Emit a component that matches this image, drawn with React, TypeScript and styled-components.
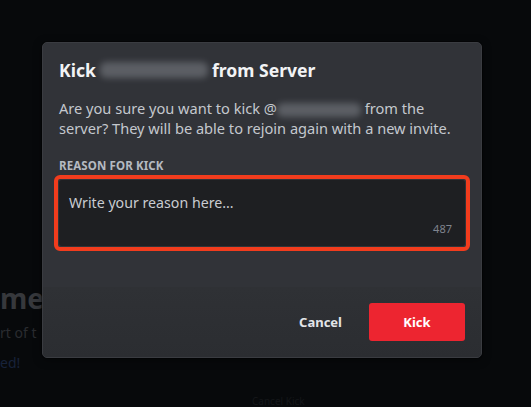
import React from "react";
import styled, { createGlobalStyle } from "styled-components";

const Global = createGlobalStyle`
  html, body { margin: 0; padding: 0; background: #07090b; }
  body { font-family: "Noto Sans", "Open Sans", sans-serif; }
  * { box-sizing: border-box; }
`;

const Page = styled.div`
  position: relative;
  width: 531px;
  height: 407px;
  overflow: hidden;
  background: #07090b;
`;

const Backdrop = styled.div`
  display: flex;
  flex-direction: column;
  padding-top: 281px;
`;

const BgHeading = styled.div`
  font-size: 28px;
  font-weight: 700;
  line-height: 34px;
  color: #36383c;
`;

const BgLine = styled.div`
  font-size: 14px;
  line-height: 20px;
  color: #2a2c30;
  margin-top: 8px;
`;

const BgLink = styled.div`
  font-size: 14px;
  line-height: 20px;
  color: #17223a;
  margin-top: 10px;
`;

const BgFoot = styled.div`
  position: absolute;
  left: 252px;
  bottom: 0;
  font-size: 10px;
  line-height: 12px;
  color: #141619;
`;

const Modal = styled.div`
  position: absolute;
  left: 42px;
  top: 42px;
  width: 440px;
  display: flex;
  flex-direction: column;
  background: #313338;
  border: 1px solid #3a3c41;
  border-radius: 5px;
  overflow: hidden;
  box-shadow: 0 0 0 1px rgba(0, 0, 0, 0.3), 0 2px 10px rgba(0, 0, 0, 0.4);
`;

const Header = styled.div`
  padding: 15px 16px 16px;
`;

const Title = styled.h1`
  margin: 0;
  font-size: 17.6px;
  line-height: 24px;
  font-weight: 700;
  color: #f2f3f5;
  display: flex;
  align-items: center;
  gap: 4px;
`;

const Blur = styled.span<{ $w: number; $h: number }>`
  display: inline-block;
  width: ${(p) => p.$w}px;
  height: ${(p) => p.$h}px;
  border-radius: 6px;
  background: #6a6d73;
  filter: blur(3px);
  vertical-align: middle;
  opacity: 0.75;
`;

const Content = styled.div`
  padding: 0 16px;
  display: flex;
  flex-direction: column;
`;

const Body = styled.p`
  margin: 0 0 20px;
  font-size: 14.6px;
  line-height: 20px;
  color: #c4c8ce;
`;

const Label = styled.div`
  font-size: 11.5px;
  line-height: 16px;
  font-weight: 700;
  letter-spacing: 0.01em;
  text-transform: uppercase;
  color: #b5bac1;
  margin-bottom: 6px;
`;

const Highlight = styled.div`
  outline: 4px solid #f23c1d;
  outline-offset: 1px;
  border-radius: 1px;
`;

const InputBox = styled.div`
  position: relative;
  height: 66px;
  background: #1e1f22;
  border-radius: 3px;
  padding: 13px 10px;
`;

const Placeholder = styled.div`
  font-size: 14.2px;
  line-height: 20px;
  color: #c9ccd1;
`;

const Counter = styled.span`
  position: absolute;
  right: 13px;
  bottom: 10px;
  font-size: 11px;
  line-height: 14px;
  color: #80848e;
`;

const Spacer = styled.div`
  height: 41px;
`;

const Footer = styled.div`
  display: flex;
  justify-content: flex-end;
  align-items: center;
  gap: 11px;
  padding: 16px 16px;
  background: linear-gradient(#2f3135, #2b2d31);
`;

const Button = styled.button<{ $variant: "link" | "danger" }>`
  height: 38px;
  min-width: ${(p) => (p.$variant === "danger" ? "96px" : "0")};
  padding: 2px 16px;
  border: none;
  border-radius: 3px;
  font-family: inherit;
  font-size: 13px;
  font-weight: 700;
  color: ${(p) => (p.$variant === "danger" ? "#ffffff" : "#e3e5e8")};
  background: ${(p) => (p.$variant === "danger" ? "#ed2530" : "transparent")};
  cursor: pointer;
`;

export default function App() {
  return (
    <Page>
      <Global />
      <Backdrop>
        <BgHeading>me</BgHeading>
        <BgLine>rt of t</BgLine>
        <BgLink>ed!</BgLink>
      </Backdrop>
      <BgFoot>Cancel Kick</BgFoot>
      <Modal>
        <Header>
          <Title>
            Kick <Blur $w={108} $h={16} /> from Server
          </Title>
        </Header>
        <Content>
          <Body>
            Are you sure you want to kick @<Blur $w={84} $h={14} /> from the
            server? They will be able to rejoin again with a new invite.
          </Body>
          <Label>Reason for Kick</Label>
          <Highlight>
            <InputBox>
              <Placeholder>Write your reason here...</Placeholder>
              <Counter>487</Counter>
            </InputBox>
          </Highlight>
          <Spacer />
        </Content>
        <Footer>
          <Button $variant="link">Cancel</Button>
          <Button $variant="danger">Kick</Button>
        </Footer>
      </Modal>
    </Page>
  );
}
